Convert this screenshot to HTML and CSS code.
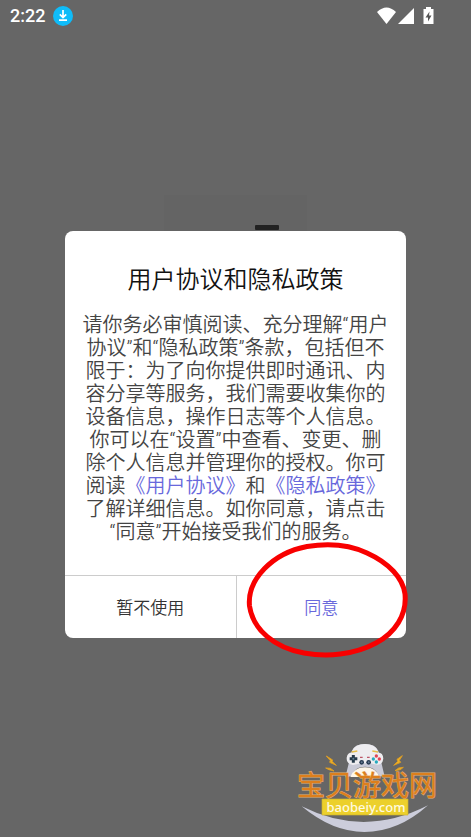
FILE: index.html
```html
<!DOCTYPE html>
<html lang="zh-CN">
<head>
<meta charset="utf-8">
<meta name="viewport" content="width=device-width, initial-scale=1">
<title>用户协议和隐私政策</title>
<link rel="stylesheet" href="styles.css">
</head>
<body>
<header class="status">
  <div class="status-group">
    <span class="clock">2:22</span>
    <svg class="download" viewBox="0 0 20 20" aria-hidden="true">
      <circle cx="10" cy="10" r="10" fill="#0fbcf9"/>
      <path d="M10 4v7M6.800 8.400l3.200 3.200 3.200-3.200M6 14.200h8" fill="none" stroke="#fff" stroke-width="1.700"/>
    </svg>
  </div>
  <svg class="signals" viewBox="0 0 58 20" aria-hidden="true">
    <path d="M0 6Q9.500-3 19 6L9.500 18z" fill="#fff"/>
    <path d="M37 2v16H21z" fill="#fff"/>
    <path d="M49 1h5v2h2.500v15h-10V3H49z" fill="#fff"/>
    <path d="M52.500 5.500L48.500 11.500h2.500v4l3.500-6H52z" fill="#555"/>
  </svg>
</header>
<main class="stage">
  <section class="dialog" role="dialog" aria-labelledby="title">
    <div class="splash"></div>
    <div class="content">
      <h1 id="title" class="title">用户协议和隐私政策</h1>
      <p class="text">请你务必审慎阅读、充分理解“用户<br>协议”和“隐私政策”条款，包括但不<br>限于：为了向你提供即时通讯、内<br>容分享等服务，我们需要收集你的<br>设备信息，操作日志等个人信息。<br>你可以在“设置”中查看、变更、删<br>除个人信息并管理你的授权。你可<br>阅读<a href="#terms">《用户协议》</a>和<a href="#privacy">《隐私政策》</a><br>了解详细信息。如你同意，请点击<br>“同意”开始接受我们的服务。</p>
    </div>
    <div class="actions">
      <button class="action" type="button">暂不使用</button>
      <button class="action agree" type="button">同意</button>
      <svg class="ring" viewBox="0 0 162 116" aria-hidden="true">
        <path d="M61 4.500C83 1 104 3 121 11C143 21 157 36 159 52C161 73 149 91 130 101C108 113 81 115 58 111C29 106 7 88 3.500 64C1 37 27 11 61 4.500z" fill="none" stroke="#f80000" stroke-width="5"/>
      </svg>
    </div>
  </section>
</main>
<svg class="brand" viewBox="0 0 170 107" role="img" aria-label="宝贝游戏网 baobeiy.com">
  <svg width="170" height="107" viewBox="0 0 510 321">
    <path d="M50 229Q238 324 429 226Q340 306 238 306Q142 306 50 229z" fill="#cccddb"/>
    <path d="M197 76Q202 42 240 42Q278 42 284 76L299 140L282 138Q271 110 240 110Q208 110 201 138L181 142z" fill="#c9cad7"/>
    <path d="M202 62Q210 42 240 42Q270 42 278 62L275 76H205z" fill="#eeedf0"/>
    <path d="M204 68Q240 80 276 68Q294 66 295 86Q293 104 278 104Q258 100 240 100Q222 100 204 105Q184 102 185 83Q188 66 204 68z" fill="#eeedf0"/>
    <path d="M196 141Q207 112 240 112Q273 112 283 141z" fill="#fff7ea"/>
    <path d="M200 66l17-3M262 63l17 3" stroke="#e4bd49" stroke-width="5"/>
    <path d="M205 75v23M194 86h23" stroke="#263a4b" stroke-width="9"/>
    <circle cx="205" cy="86" r="3" fill="#658393"/>
    <circle cx="230" cy="97" r="7" fill="#26394f"/><circle cx="251" cy="97" r="7" fill="#26394f"/>
    <circle cx="230" cy="97" r="3" fill="#667991"/><circle cx="251" cy="97" r="3" fill="#667991"/>
    <path d="M225 82h8M246 82h8" stroke="#bd5668" stroke-width="4"/>
    <circle cx="274" cy="78" r="5" fill="#df4556"/><circle cx="265" cy="87" r="5" fill="#27a9bf"/>
    <circle cx="283" cy="87" r="5" fill="#df4556"/><circle cx="274" cy="96" r="5" fill="#27a9bf"/>
    <path d="M124 78L143 90L141 94L154 106L134 97L136 92zM122 114L136 115L147 123L132 119zM352 77L336 88L338 94L326 106L347 97L343 91zM355 112L341 114L330 122L346 119z" fill="#eeb326" stroke="#d99b26" stroke-width="3"/>
    <path d="M111 207H369V255H111z" fill="#ecd02b" stroke="#cbb32e" stroke-width="2"/>
  </svg>
  <text class="brand-name" x="82" y="66" text-anchor="middle">宝贝游戏网</text>
  <text class="brand-site" x="81" y="82" text-anchor="middle">baobeiy.com</text>
</svg>
</body>
</html>
```
FILE: styles.css
```css
* {
  box-sizing: border-box;
}

body {
  margin: 0;
  min-height: 100vh;
  display: flex;
  flex-direction: column;
  position: relative;
  background: #666;
  color: #444;
  font-family: Roboto, "Noto Sans CJK SC", sans-serif;
}

.status {
  height: 32px;
  padding: 0 36px 0 10px;
  display: flex;
  align-items: center;
  justify-content: space-between;
}

.status-group {
  display: flex;
  align-items: center;
  gap: 8px;
}

.clock {
  color: #fff;
  font-size: 18px;
  font-weight: 500;
  line-height: 32px;
}

.download {
  width: 20px;
  height: 20px;
}

.signals {
  width: 58px;
  height: 20px;
}

.stage {
  flex: 1;
  display: flex;
  align-items: center;
  justify-content: center;
}

.dialog {
  position: relative;
  width: calc(100% - 130px);
  max-width: 420px;
  border-radius: 8px;
  background: #fff;
}

.splash {
  position: absolute;
  left: 99px;
  bottom: 100%;
  width: 143px;
  height: 36px;
  background: #646464;
}

.splash::after {
  content: "";
  position: absolute;
  right: 28px;
  bottom: 1px;
  width: 24px;
  height: 5px;
  border-radius: 1px;
  background: #222;
}

.content {
  padding: 33px 0 31px;
  text-align: center;
}

.title {
  margin: 0 0 18px;
  color: #111;
  font-size: 24px;
  font-weight: 350;
  line-height: 32px;
}

.text {
  margin: 0;
  font-size: 20px;
  font-weight: 350;
  line-height: 23px;
  white-space: nowrap;
}

.text a {
  color: #6868dc;
  text-decoration: none;
}

.actions {
  position: relative;
  display: grid;
  grid-template-columns: 1fr 1fr;
  border-top: 1px solid #ccc;
}

.action {
  height: 62px;
  padding: 0 0 2px;
  border: 0;
  background: none;
  color: #333;
  font: inherit;
  font-size: 17px;
  font-weight: 350;
}

.agree {
  border-left: 1px solid #ccc;
  color: #6868dc;
}

.ring {
  position: absolute;
  right: -2px;
  bottom: -20px;
  width: 162px;
  height: 116px;
  pointer-events: none;
}

.brand {
  position: absolute;
  right: 16px;
  bottom: 0;
  width: 170px;
  height: 107px;
}

.brand-name {
  font-family: "Noto Sans CJK SC", sans-serif;
  font-size: 28px;
  font-weight: 400;
  fill: #dd7f1c;
  stroke: #e5b070;
  stroke-width: 1px;
  paint-order: stroke;
}

.brand-site {
  font-family: "Noto Sans", sans-serif;
  font-size: 13px;
  font-weight: 500;
  fill: #fffbe0;
}
```
